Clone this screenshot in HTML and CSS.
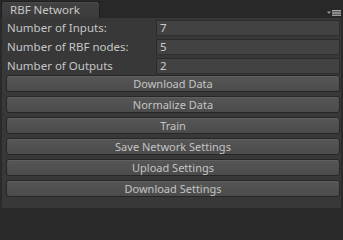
FILE: index.html
```html
<!DOCTYPE html>
<html>
<head>
<meta charset="utf-8">
<link rel="stylesheet" href="styles.css">
</head>
<body>
<div class="window">
  <div class="tabbar">
    <div class="tab">RBF Network</div>
    <div class="menu">
      <svg width="14" height="6" viewBox="0 0 14 6">
        <polygon points="0,1.5 4,1.5 2,4" fill="#9c9c9c"/>
        <rect x="5" y="0" width="9" height="1.1" fill="#a8a8a8"/>
        <rect x="5" y="1.6" width="9" height="1.1" fill="#a8a8a8"/>
        <rect x="5" y="3.2" width="9" height="1.1" fill="#a8a8a8"/>
        <rect x="5" y="4.8" width="9" height="1.1" fill="#a8a8a8"/>
      </svg>
    </div>
  </div>
  <div class="panel">
    <div class="row"><span class="label">Number of Inputs:</span><span class="field">7</span></div>
    <div class="row"><span class="label">Number of RBF nodes:</span><span class="field">5</span></div>
    <div class="row"><span class="label">Number of Outputs</span><span class="field">2</span></div>
    <div class="buttons">
      <div class="btn">Download Data</div>
      <div class="btn">Normalize Data</div>
      <div class="btn">Train</div>
      <div class="btn">Save Network Settings</div>
      <div class="btn">Upload Settings</div>
      <div class="btn">Download Settings</div>
    </div>
  </div>
</div>
</body>
</html>
```
FILE: styles.css
```css
html, body {
  margin: 0;
  padding: 0;
  background: #2a2a2a;
}
body {
  width: 343px;
  height: 208px;
  overflow: hidden;
  font-family: "Noto Sans", "DejaVu Sans", sans-serif;
  font-size: 11px;
}
.window {
  display: flex;
  flex-direction: column;
  height: 208px;
}
.tabbar {
  height: 18px;
  background: #282828;
  display: flex;
  align-items: flex-end;
  justify-content: space-between;
}
.tab {
  margin-left: 1px;
  width: 99px;
  height: 17px;
  box-sizing: border-box;
  padding-left: 8px;
  background: linear-gradient(#424242, #3b3b3b);
  border: 1px solid #1f1f1f;
  border-bottom: none;
  border-radius: 3px 3px 0 0;
  color: #c8c8c8;
  font-size: 11.5px;
  line-height: 16px;
  box-shadow: inset 0 1px 0 #4a4a4a;
}
.menu {
  margin-right: 2px;
  margin-bottom: 2px;
  display: flex;
}
.panel {
  flex: 1;
  margin: 0 2px;
  background: #383838;
  padding: 0 1px 0 4px;
}
.row {
  display: flex;
  align-items: center;
  height: 19px;
}
.label {
  width: 149px;
  padding-left: 1px;
  color: #c6c6c6;
  font-size: 11.5px;
  white-space: nowrap;
}
.field {
  flex: 1;
  height: 16px;
  box-sizing: border-box;
  background: #424242;
  border: 1px solid #2b2b2b;
  border-bottom-color: #303030;
  color: #cdcdcd;
  font-size: 11.5px;
  line-height: 14px;
  padding-left: 3px;
}
.buttons {
  display: flex;
  flex-direction: column;
  gap: 4px;
}
.btn {
  height: 17px;
  box-sizing: border-box;
  background: linear-gradient(#565656, #4b4b4b);
  border: 1px solid #262626;
  border-radius: 3px;
  box-shadow: inset 0 1px 0 #606060;
  color: #c4c4c4;
  text-align: center;
  line-height: 15px;
  white-space: nowrap;
}
```
